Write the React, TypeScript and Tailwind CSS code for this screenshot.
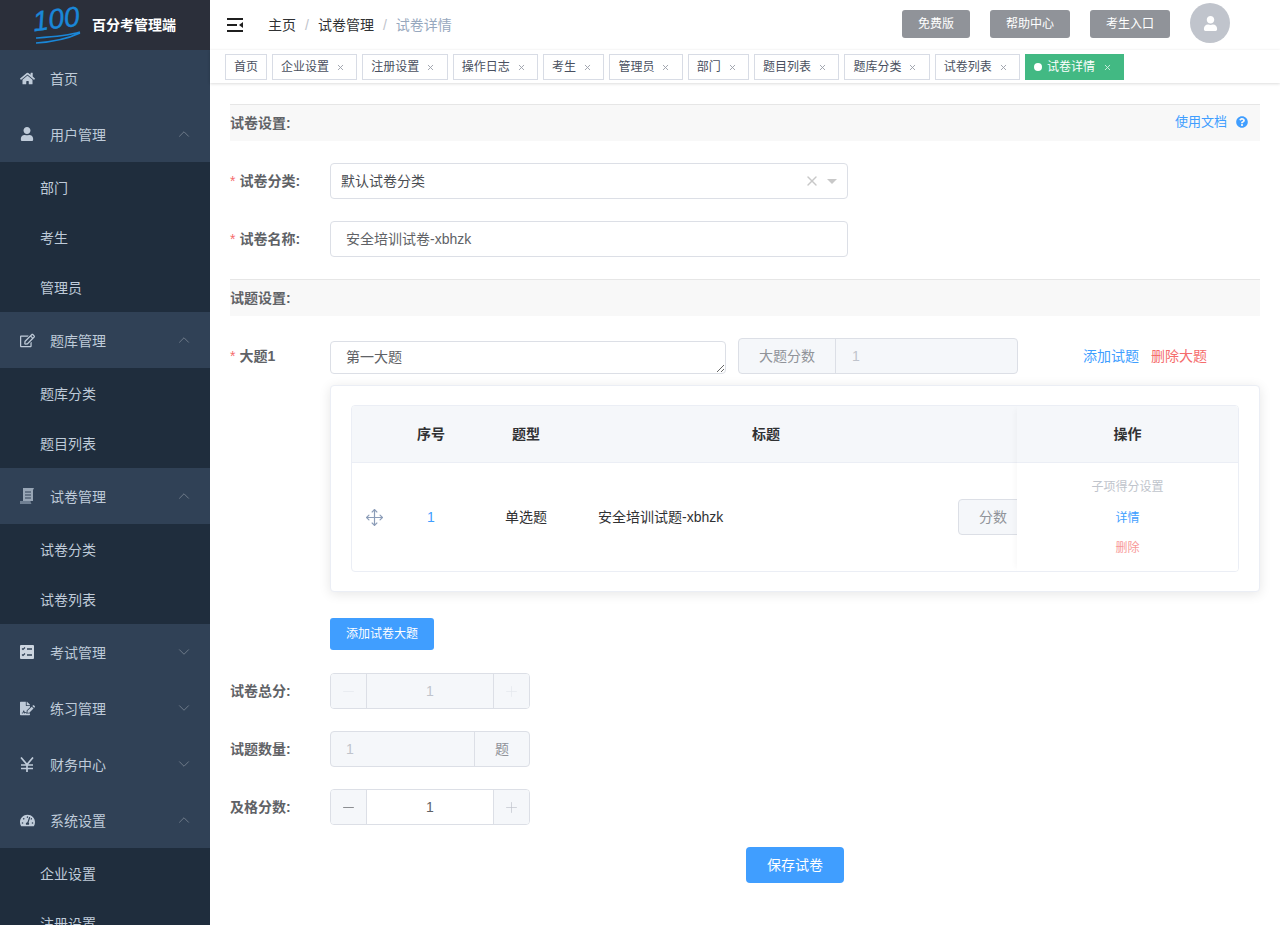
import React from 'react';
import { ChevronUp, ChevronDown, Move, X, Plus, Minus } from 'lucide-react';
import { FaHome, FaUser, FaRegEdit, FaFileSignature, FaTachometerAlt, FaQuestionCircle } from 'react-icons/fa';

const font = '[font-family:"Liberation_Sans","Noto_Sans_CJK_SC",sans-serif]';

function ExamIcon() {
  return (
    <svg width="14" height="14" viewBox="0 0 14 14">
      <rect width="14" height="14" rx="1" fill="#ccd5e0" />
      <path d="M2 3.5l1 1 2-2M2 9.5l1 1 2-2" stroke="#304156" strokeWidth="1.1" fill="none" />
      <path d="M7 4h5M7 10h5" stroke="#304156" strokeWidth="1.3" />
    </svg>
  );
}

function ScrollIcon() {
  return (
    <svg width="14" height="16" viewBox="0 0 14 16">
      <path d="M3 0h11l-1 2v11H3z" fill="#98a6b6" />
      <path d="M0 13h10.5c0 1 .5 2 1 3H0z" fill="#6f7f92" />
      <path d="M5 4h6M5 7h6M5 10h6" stroke="#304156" strokeWidth="1.1" />
    </svg>
  );
}

function YenIcon() {
  return (
    <svg width="14" height="15" viewBox="0 0 14 15">
      <path d="M1 0.5l6 7 6-7M7 7.5V15M1 8h12M1 11.5h12" stroke="#bfcbd9" strokeWidth="1.7" fill="none" />
    </svg>
  );
}

function Logo() {
  return (
    <svg width="56" height="38" viewBox="0 0 56 38" className="shrink-0">
      <text x="1" y="25" transform="rotate(-7 3 25)" fontFamily="Liberation Sans" fontStyle="italic" fontSize="28" fill="#1a87d8" stroke="#1a87d8" strokeWidth="0.4">100</text>
      <path d="M3 32C18 31 34 30 47 26M3 37C18 36 34 33 47 27" stroke="#1a87d8" strokeWidth="1.6" fill="none" />
    </svg>
  );
}

function MenuItem({ icon, label, arrow }: { icon: React.ReactNode; label: string; arrow?: 'up' | 'down' }) {
  return (
    <div className="flex h-14 items-center pl-5 pr-[17px] text-sm text-[#bfcbd9]">
      <span className="flex w-[30px] items-center">{icon}</span>
      <span className="flex-1 pt-[2px]">{label}</span>
      {arrow === 'up' && <ChevronUp size={18} strokeWidth={1.3} className="text-[#6f7b8a]" />}
      {arrow === 'down' && <ChevronDown size={18} strokeWidth={1.3} className="text-[#6f7b8a]" />}
    </div>
  );
}

function SubItem({ label }: { label: string }) {
  return <div className="flex h-[50px] items-center bg-[#1f2d3d] pl-10 pt-[2px] text-sm text-[#bfcbd9]">{label}</div>;
}

function Sidebar() {
  const cls = 'text-[#bfcbd9]';
  return (
    <aside className="h-full w-[210px] shrink-0 overflow-hidden bg-[#304156]">
      <div className="flex h-[50px] items-center bg-[#2b2f3a] pl-[33px]">
        <Logo />
        <span className="ml-[3px] text-sm font-bold text-white">百分考管理端</span>
      </div>
      <MenuItem icon={<FaHome size={15} className={cls} />} label="首页" />
      <MenuItem icon={<FaUser size={14} className={cls} />} label="用户管理" arrow="up" />
      <SubItem label="部门" />
      <SubItem label="考生" />
      <SubItem label="管理员" />
      <MenuItem icon={<FaRegEdit size={15} className={cls} />} label="题库管理" arrow="up" />
      <SubItem label="题库分类" />
      <SubItem label="题目列表" />
      <MenuItem icon={<ScrollIcon />} label="试卷管理" arrow="up" />
      <SubItem label="试卷分类" />
      <SubItem label="试卷列表" />
      <MenuItem icon={<ExamIcon />} label="考试管理" arrow="down" />
      <MenuItem icon={<FaFileSignature size={15} className={cls} />} label="练习管理" arrow="down" />
      <MenuItem icon={<YenIcon />} label="财务中心" arrow="down" />
      <MenuItem icon={<FaTachometerAlt size={15} className={cls} />} label="系统设置" arrow="up" />
      <SubItem label="企业设置" />
      <SubItem label="注册设置" />
    </aside>
  );
}

function Header() {
  return (
    <header className="flex h-[50px] shrink-0 items-center bg-white pl-[17px]">
      <svg width="16" height="16" viewBox="0 0 16 16" className="mb-[1px]">
        <path d="M0 2h16M0 14h16M0 8h10" stroke="#1f1f1f" strokeWidth="2" />
        <path d="M16 5v6l-4-3z" fill="#1f1f1f" />
      </svg>
      <nav className="ml-[25px] flex items-center text-sm text-[#303133]">
        <span>主页</span>
        <span className="mx-[9px] text-[#c0c4cc]">/</span>
        <span>试卷管理</span>
        <span className="mx-[9px] text-[#c0c4cc]">/</span>
        <span className="text-[#97a8be]">试卷详情</span>
      </nav>
      <div className="ml-auto mr-[50px] flex items-center">
        <button className="mt-[-2px] h-[28px] w-[68px] rounded-[3px] bg-[#909399] text-xs text-white">免费版</button>
        <button className="ml-5 mt-[-2px] h-[28px] w-20 rounded-[3px] bg-[#909399] text-xs text-white">帮助中心</button>
        <button className="ml-5 mt-[-2px] h-[28px] w-20 rounded-[3px] bg-[#909399] text-xs text-white">考生入口</button>
        <div className="ml-5 mb-[4px] flex h-10 w-10 items-center justify-center rounded-full bg-[#c0c4cc]">
          <FaUser size={15} className="text-white" />
        </div>
      </div>
    </header>
  );
}

const tags = ['企业设置', '注册设置', '操作日志', '考生', '管理员', '部门', '题目列表', '题库分类', '试卷列表'];

function TagsBar() {
  return (
    <div className="relative z-10 flex h-[33px] shrink-0 items-start gap-[5px] bg-white pl-[15px] pt-1 shadow-[0_1px_3px_0_rgba(0,0,0,0.12),0_0_3px_0_rgba(0,0,0,0.04)]">
      <span className="flex h-[26px] items-center border border-[#d8dce5] px-2 text-xs text-[#495060]">首页</span>
      {tags.map((t) => (
        <span key={t} className="flex h-[26px] items-center border border-[#d8dce5] pl-2 pr-2 text-xs text-[#495060]">
          {t}
          <span className="ml-[3.33px] flex w-4 justify-center">
            <X size={9} strokeWidth={2.4} className="text-[#9a9ea8]" />
          </span>
        </span>
      ))}
      <span className="flex h-[26px] items-center border border-[#42b983] bg-[#42b983] px-2 text-xs text-white">
        <span className="mr-[5px] h-2 w-2 rounded-full bg-white" />
        试卷详情
        <span className="ml-1 flex w-4 justify-center">
          <X size={9} strokeWidth={2.4} className="text-[#d5f0e3]" />
        </span>
      </span>
    </div>
  );
}

function SectionBar({ title, right }: { title: string; right?: React.ReactNode }) {
  return (
    <div className="flex h-[37px] items-center justify-between border-t border-[#e6e6e6] bg-[#f8f8f8] text-sm font-bold text-[#606266]">
      <span>{title}</span>
      {right}
    </div>
  );
}

function Label({ text, required }: { text: string; required?: boolean }) {
  return (
    <div className="flex h-9 w-[100px] shrink-0 items-center text-sm font-bold text-[#606266]">
      {required && <span className="mr-[4px] font-normal text-[#f56c6c]">*</span>}
      {text}
    </div>
  );
}

function NumberBox({ disabled, value }: { disabled?: boolean; value: string }) {
  const iconColor = disabled ? 'text-[#e4e7ed]' : 'text-[#606266]';
  return (
    <div className="flex h-9 w-[200px] overflow-hidden rounded border border-[#dcdfe6] text-sm">
      <div className="flex w-9 shrink-0 items-center justify-center border-r border-[#dcdfe6] bg-[#f5f7fa]">
        <Minus size={17} strokeWidth={1} className={iconColor} />
      </div>
      <div className={`flex flex-1 items-center justify-center ${disabled ? 'bg-[#f5f7fa] text-[#c0c4cc]' : 'bg-white text-[#606266]'}`}>{value}</div>
      <div className="flex w-9 shrink-0 items-center justify-center border-l border-[#dcdfe6] bg-[#f5f7fa]">
        <Plus size={17} strokeWidth={1} className={disabled ? 'text-[#e4e7ed]' : 'text-[#c0c4cc]'} />
      </div>
    </div>
  );
}

function QuestionTable() {
  return (
    <div className="flex h-[167px] overflow-hidden rounded border border-[#ebeef5] text-sm text-[#303133]">
      <div className="flex min-w-0 flex-1 flex-col overflow-hidden">
        <div className="flex h-[57px] shrink-0 items-center border-b border-[#ebeef5] bg-[#f5f7fa] font-bold">
          <span className="w-[46px] shrink-0" />
          <span className="w-[66px] shrink-0 text-center">序号</span>
          <span className="w-[124px] shrink-0 text-center">题型</span>
          <span className="w-[356px] shrink-0 text-center">标题</span>
        </div>
        <div className="flex flex-1 items-center">
          <span className="flex w-[46px] shrink-0 justify-center pr-[2px]">
            <Move size={19} strokeWidth={1.5} className="text-[#8c9db8]" />
          </span>
          <span className="w-[66px] shrink-0 text-center text-[#409eff]">1</span>
          <span className="w-[124px] shrink-0 text-center">单选题</span>
          <span className="w-[356px] shrink-0 pl-[10px]">安全培训试题-xbhzk</span>
          <div className="ml-[14px] flex h-9 w-[200px] shrink-0 items-center rounded-l border border-[#dcdfe6] bg-[#f5f7fa] pl-5 text-[#909399]">分数</div>
        </div>
      </div>
      <div className="relative z-10 flex w-[221px] shrink-0 flex-col bg-white shadow-[-4px_0_6px_-3px_rgba(0,0,0,0.04)]">
        <div className="flex h-[57px] shrink-0 items-center justify-center border-b border-[#ebeef5] bg-[#f5f7fa] font-bold">操作</div>
        <div className="flex flex-1 flex-col items-center justify-center gap-[14.5px] pt-[1px] text-xs">
          <span className="text-[#c0c4cc]">子项得分设置</span>
          <span className="text-[#409eff]">详情</span>
          <span className="text-[#f89898]">删除</span>
        </div>
      </div>
    </div>
  );
}

function Form() {
  return (
    <main className="flex-1 overflow-hidden bg-white px-5 pt-[21px]">
      <SectionBar
        title="试卷设置:"
        right={
          <span className="mb-[2px] flex items-center pr-3 text-[13px] font-normal text-[#409eff]">
            使用文档
            <FaQuestionCircle size={12} className="ml-[9px] text-[#409eff]" />
          </span>
        }
      />
      <div className="mt-[22px] flex">
        <Label text="试卷分类:" required />
        <div className="flex h-9 w-[518px] items-center rounded border border-[#dcdfe6] pl-[10px] pr-[10px] text-sm text-[#4a4d52]">
          <span className="flex-1">默认试卷分类</span>
          <X size={16} strokeWidth={2} className="mr-[7px] text-[#c8c8c8]" />
          <span className="h-0 w-0 border-x-[5px] border-t-[5px] border-x-transparent border-t-[#c8c8c8]" />
        </div>
      </div>
      <div className="mt-[22px] flex">
        <Label text="试卷名称:" required />
        <div className="flex h-9 w-[518px] items-center rounded border border-[#dcdfe6] px-[15px] text-sm text-[#606266]">安全培训试卷-xbhzk</div>
      </div>
      <div className="mt-[22px]">
        <SectionBar title="试题设置:" />
      </div>
      <div className="mt-[22px] flex">
        <Label text="大题1" required />
        <textarea
          defaultValue="第一大题"
          className="mt-[3px] block h-[33px] w-[396px] rounded border border-[#dcdfe6] px-[15px] py-[5px] text-sm leading-[21px] text-[#606266] outline-none"
        />
        <div className="ml-3 flex h-9 w-[280px] overflow-hidden rounded border border-[#dcdfe6] bg-[#f5f7fa] text-sm">
          <span className="flex w-[97px] items-center justify-center border-r border-[#dcdfe6] text-[#909399]">大题分数</span>
          <span className="flex flex-1 items-center pl-4 text-[#c0c4cc]">1</span>
        </div>
        <div className="ml-[65px] flex h-9 items-center gap-3 text-sm">
          <span className="text-[#409eff]">添加试题</span>
          <span className="text-[#f56c6c]">删除大题</span>
        </div>
      </div>
      <div className="ml-[100px] mt-[11px] h-[207px] rounded border border-[#ebeef5] bg-white px-5 pt-[19px] shadow-[0_2px_12px_0_rgba(0,0,0,0.1)]">
        <QuestionTable />
      </div>
      <button className="ml-[100px] mt-[26px] block h-8 w-[104px] rounded-[3px] bg-[#409eff] text-xs text-white">添加试卷大题</button>
      <div className="mt-[23px] flex">
        <Label text="试卷总分:" />
        <NumberBox disabled value="1" />
      </div>
      <div className="mt-[22px] flex">
        <Label text="试题数量:" />
        <div className="flex h-9 w-[200px] overflow-hidden rounded border border-[#dcdfe6] bg-[#f5f7fa] text-sm">
          <span className="flex flex-1 items-center pl-[15px] text-[#c0c4cc]">1</span>
          <span className="flex w-[55px] items-center justify-center border-l border-[#dcdfe6] text-[#909399]">题</span>
        </div>
      </div>
      <div className="mt-[22px] flex">
        <Label text="及格分数:" />
        <NumberBox value="1" />
      </div>
      <div className="ml-[100px] mt-[22px] flex justify-center">
        <button className="h-9 w-[98px] rounded bg-[#409eff] text-sm text-white">保存试卷</button>
      </div>
    </main>
  );
}

export default function App() {
  return (
    <div className={`flex h-[925px] w-[1280px] overflow-hidden bg-white ${font}`}>
      <Sidebar />
      <div className="flex min-w-0 flex-1 flex-col">
        <Header />
        <TagsBar />
        <Form />
      </div>
    </div>
  );
}
